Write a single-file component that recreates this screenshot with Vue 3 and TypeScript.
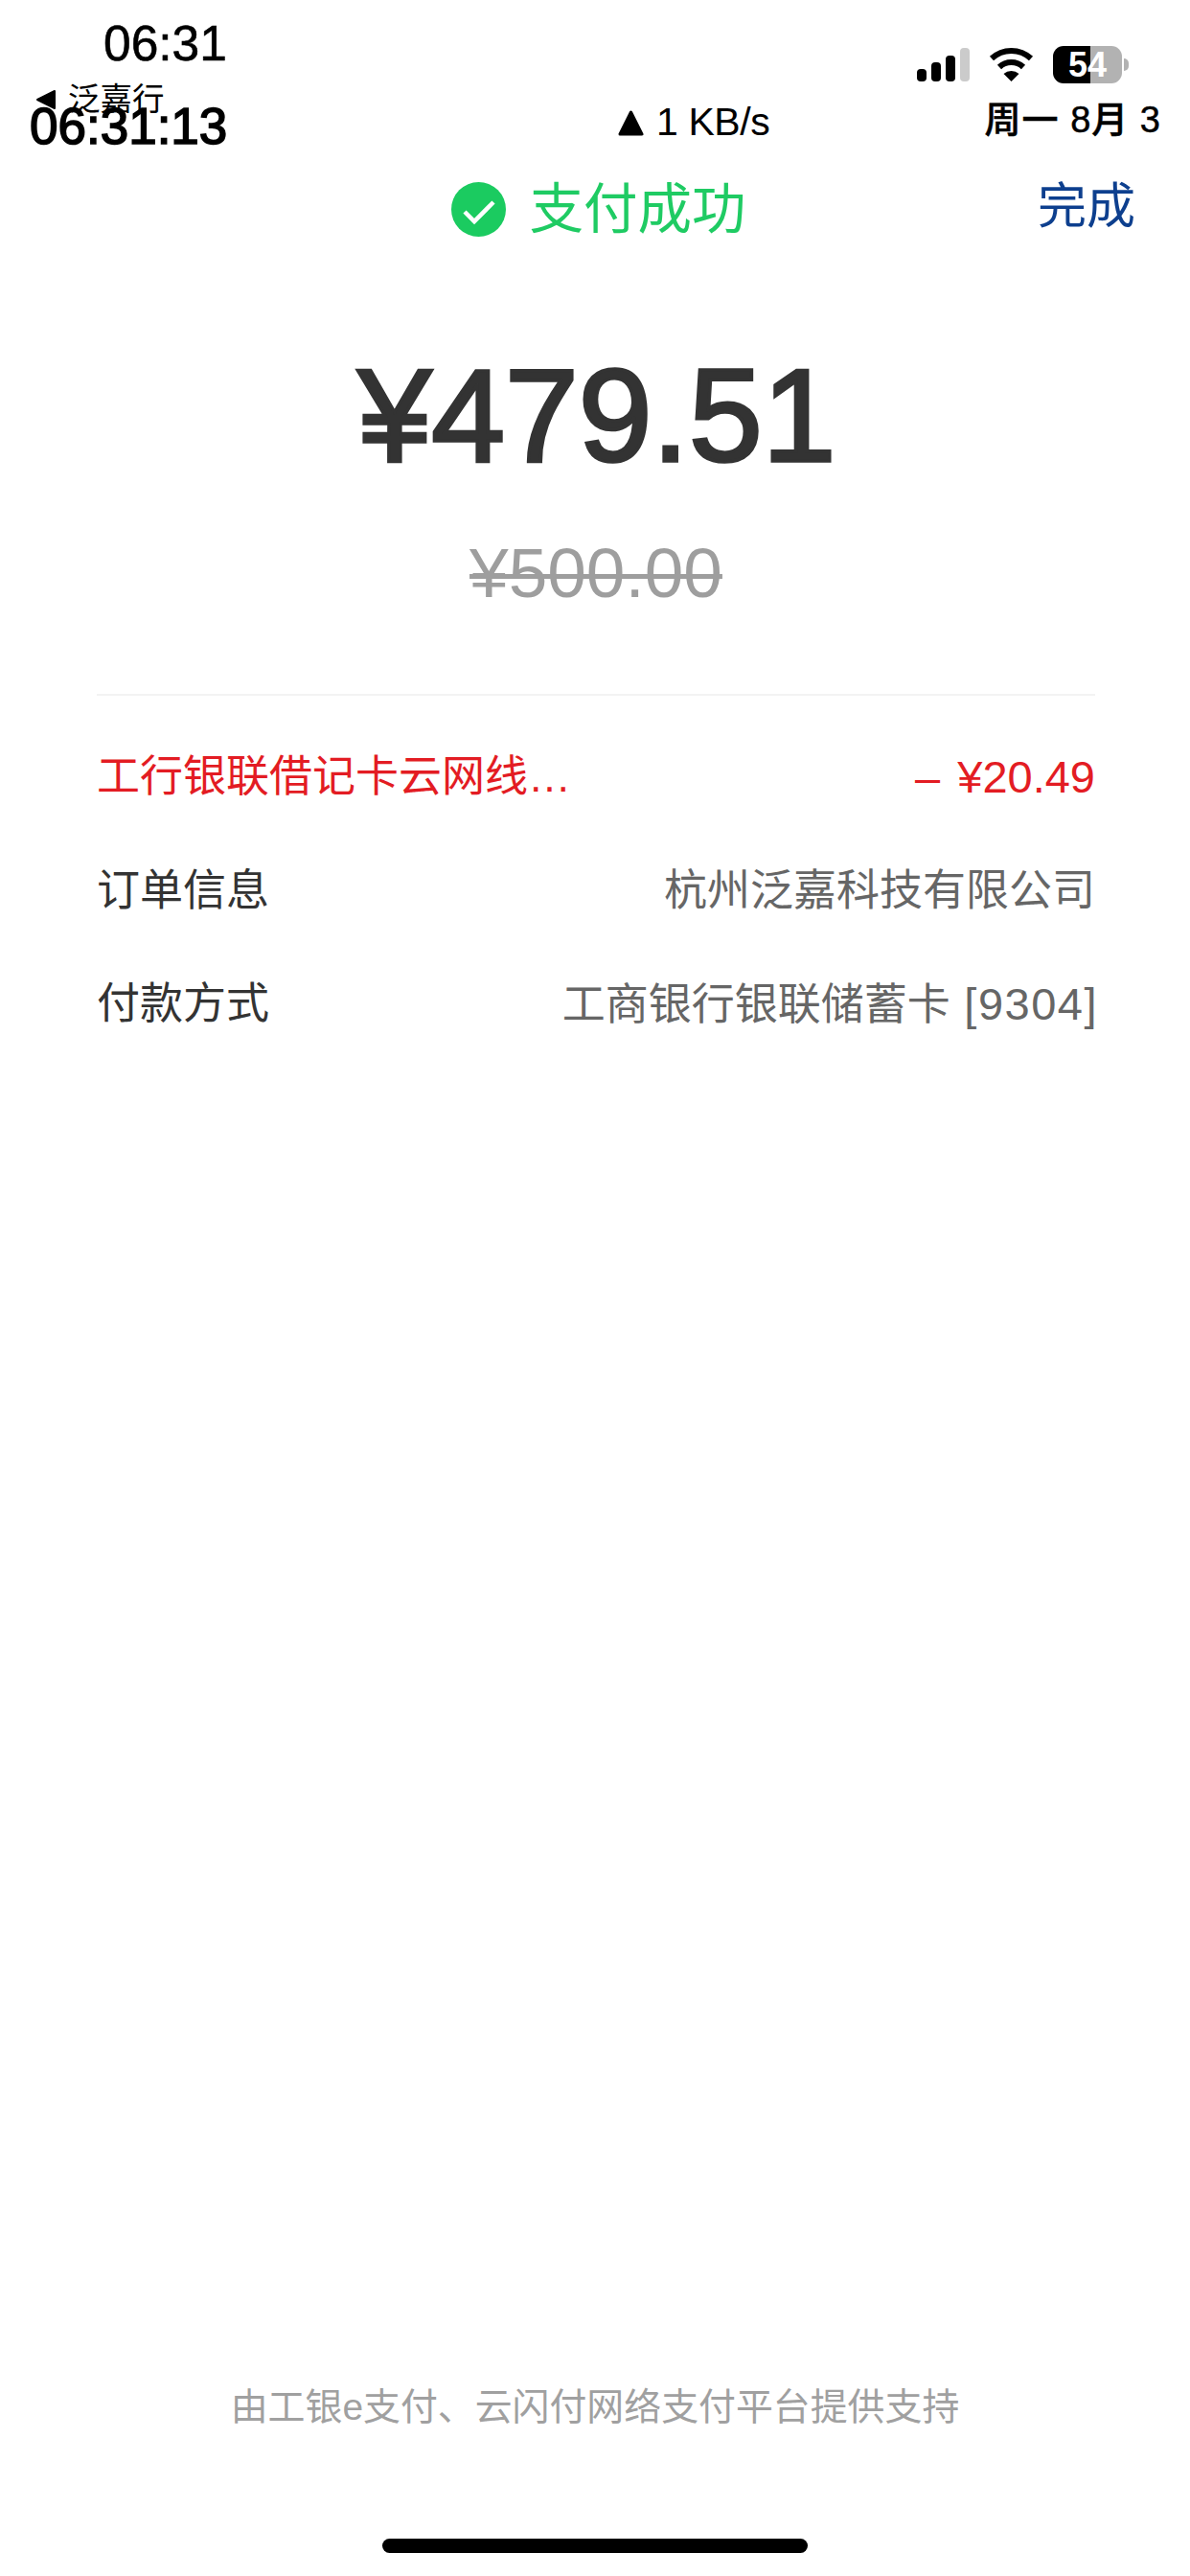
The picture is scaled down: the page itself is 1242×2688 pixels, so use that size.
<script setup lang="ts">
interface Row {
  label: string;
  value: string;
  num: string;
  kind: string;
}
const rows: Row[] = [
  { label: "工行银联借记卡云网线…", value: "", num: "– ¥20.49", kind: "discount" },
  { label: "订单信息", value: "杭州泛嘉科技有限公司", num: "", kind: "" },
  { label: "付款方式", value: "工商银行银联储蓄卡", num: " [9304]", kind: "card" },
];
const bars = ["b1", "b2", "b3", "b4"];
</script>

<template>
  <main class="page">
    <header class="status">
      <div class="left">
        <div class="time">06:31</div>
        <div class="back">
          <svg class="back-icon" width="22" height="22" viewBox="0 0 22 22">
            <polygon points="2,11 20,2 20,20" fill="#000" stroke="#000" stroke-width="2" stroke-linejoin="round" />
          </svg>
          <span>泛嘉行</span>
        </div>
        <div class="clock">06:31:13</div>
      </div>
      <div class="speed">
        <svg width="27" height="28" viewBox="0 0 27 28">
          <polygon points="13.5,3 25,26 2,26" fill="#000" stroke="#000" stroke-width="3" stroke-linejoin="round" />
        </svg>
        <span>1 KB/s</span>
      </div>
      <div class="right">
        <div class="indicators">
          <div class="signal">
            <i v-for="b in bars" :key="b" :class="b"></i>
          </div>
          <svg class="wifi" width="47" height="37" viewBox="0 0 47 37">
            <path d="M3 13 A30 30 0 0 1 44 13" fill="none" stroke="#000" stroke-width="6" />
            <path d="M11 22 A18 18 0 0 1 36 22" fill="none" stroke="#000" stroke-width="6" />
            <path d="M23.5 37 L15.5 29 A12 12 0 0 1 31.5 29 Z" fill="#000" />
          </svg>
          <div class="battery">54</div>
        </div>
        <div class="date">周一 8月 3</div>
      </div>
    </header>

    <nav class="nav">
      <div class="title">
        <svg width="57" height="57" viewBox="0 0 57 57">
          <circle cx="28.5" cy="28.5" r="28.5" fill="#1bcb60" />
          <polyline points="14,31 24,41 44,21" fill="none" stroke="#fff" stroke-width="4.5" />
        </svg>
        <span>支付成功</span>
      </div>
      <span class="done">完成</span>
    </nav>

    <section class="amount">
      <div class="paid">¥479.51</div>
      <div class="original">¥500.00</div>
    </section>

    <section class="details">
      <div v-for="r in rows" :key="r.label" class="row" :class="r.kind">
        <span class="label">{{ r.label }}</span>
        <span class="value">{{ r.value }}<span class="num">{{ r.num }}</span></span>
      </div>
    </section>

    <footer class="footer">
      <p>由工银e支付、云闪付网络支付平台提供支持</p>
      <div class="home"></div>
    </footer>
  </main>
</template>

<style scoped>
.page {
  width: 1242px;
  height: 2688px;
  display: flex;
  flex-direction: column;
  background: #fff;
  color: #333;
  font-family: "Liberation Sans", "Noto Sans CJK SC", sans-serif;
  overflow: hidden;
}
.status {
  height: 160px;
  display: grid;
  grid-template-columns: 560px 1fr auto;
  color: #000;
  box-sizing: border-box;
  padding: 20px 30px 0 31px;
}
.time {
  margin-left: 77px;
  font-size: 51.5px;
  line-height: 50px;
  height: 50px;
  -webkit-text-stroke: 0.6px #000;
}
.back {
  display: flex;
  align-items: center;
  gap: 12px;
  margin-left: 6px;
  margin-top: 15px;
  height: 38px;
  font-size: 33.5px;
  line-height: 38px;
}
.clock {
  font-size: 53px;
  line-height: 40px;
  height: 40px;
  -webkit-text-stroke: 1.6px #000;
  margin-top: -11px;
}
.speed {
  display: flex;
  align-items: flex-start;
  gap: 13px;
  margin-left: 54px;
  padding-top: 92px;
  font-size: 41px;
  line-height: 30px;
  letter-spacing: -0.4px;
}
.speed svg {
  margin-top: 2px;
}
.right {
  display: flex;
  flex-direction: column;
  align-items: flex-end;
}
.indicators {
  display: flex;
  align-items: flex-end;
  margin-top: 28px;
  margin-right: 41px;
  height: 39px;
}
.signal {
  display: flex;
  align-items: flex-end;
  gap: 4.5px;
  margin-right: 20px;
  margin-bottom: 2px;
}
.signal i {
  display: block;
  width: 10.5px;
  border-radius: 4px;
  background: #000;
}
.signal .b1 { height: 13px; }
.signal .b2 { height: 20px; }
.signal .b3 { height: 27px; }
.signal .b4 { height: 35px; background: #cbcbcb; }
.wifi {
  margin-right: 20px;
  margin-bottom: 2px;
}
.battery {
  position: relative;
  width: 72px;
  height: 39px;
  border-radius: 11px;
  background: linear-gradient(to right, #000 54%, #b2b2b2 54%);
  color: #fff;
  font-size: 36px;
  font-weight: 700;
  line-height: 39px;
  text-align: center;
}
.battery::after {
  content: "";
  position: absolute;
  right: -7px;
  top: 13px;
  width: 5px;
  height: 13px;
  border-radius: 0 5px 5px 0;
  background: #b2b2b2;
}
.date {
  margin-top: 19px;
  font-size: 38px;
  line-height: 38px;
  font-weight: 500;
  letter-spacing: 1px;
  -webkit-text-stroke: 0.5px #000;
}
.nav {
  position: relative;
  height: 114px;
  box-sizing: border-box;
  padding-top: 3px;
  display: flex;
  align-items: center;
  justify-content: center;
}
.title {
  display: flex;
  align-items: center;
  gap: 25px;
  margin-left: 7px;
  font-size: 56.5px;
  line-height: 60px;
  color: #1fcb63;
}
.done {
  position: absolute;
  right: 57px;
  top: 26px;
  font-size: 51px;
  line-height: 60px;
  color: #0d3f8e;
}
.amount {
  height: 452px;
  display: flex;
  flex-direction: column;
  align-items: center;
  box-sizing: border-box;
  padding-top: 84px;
  border-bottom: 2px solid #f3f3f3;
  margin: 0 99px 0 101px;
}
.paid {
  margin-left: 2px;
  font-size: 138px;
  line-height: 150px;
  color: #333;
  -webkit-text-stroke: 3.5px #333;
}
.original {
  margin-top: 50px;
  font-size: 73px;
  line-height: 80px;
  color: #9e9e9e;
  text-decoration: line-through;
  text-decoration-thickness: 5px;
}
.details {
  margin: 26px 99px 0 101px;
  display: flex;
  flex-direction: column;
}
.row {
  height: 118.5px;
  display: flex;
  align-items: center;
  justify-content: space-between;
  font-size: 45px;
  line-height: 56px;
}
.value {
  color: #666;
  white-space: pre;
}
.num {
  font-size: 47px;
}
.card .num {
  letter-spacing: 1.5px;
}
.card .value {
  margin-right: -3px;
}
.discount .num {
  word-spacing: 5px;
}
.discount .label,
.discount .value {
  color: #e31c23;
}
.footer {
  flex: 1;
  display: flex;
  flex-direction: column;
  align-items: center;
  justify-content: flex-end;
  padding-bottom: 24px;
}
.footer p {
  margin: 0 0 112px;
  font-size: 38.9px;
  line-height: 50px;
  color: #a0a0a0;
}
.home {
  width: 444px;
  height: 15px;
  border-radius: 8px;
  background: #000;
}
</style>
